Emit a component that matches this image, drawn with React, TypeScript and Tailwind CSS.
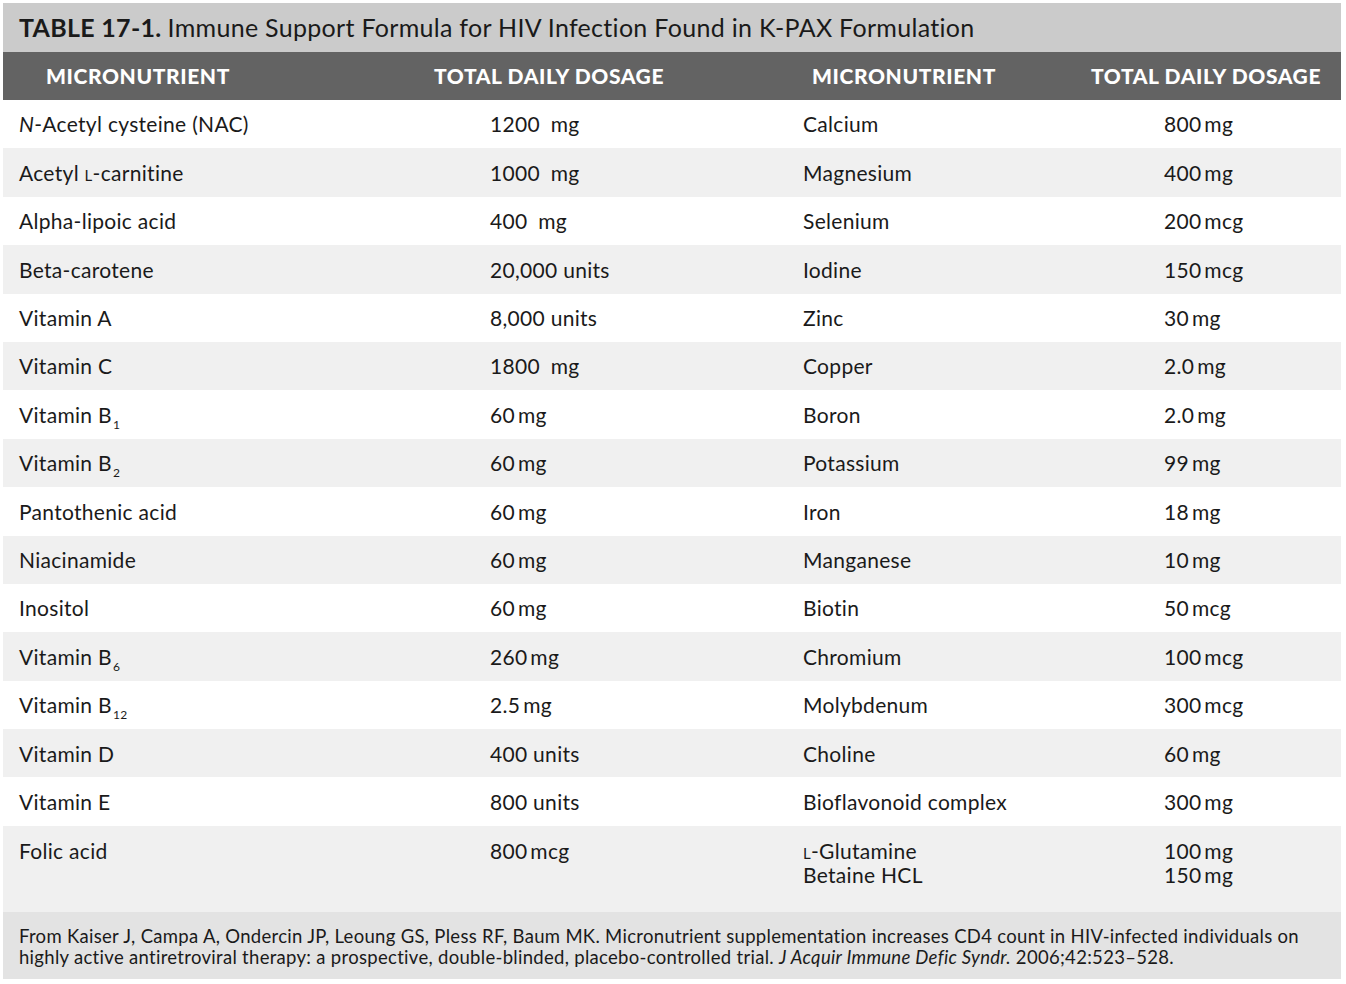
import React from "react";

const F = { fontFamily: "Lato, 'Noto Sans', 'Liberation Sans', sans-serif" };

const T = "\u2009";

const Sm = ({ c }: { c: string }) => <span className="text-[15px] leading-none">{c}</span>;
const Sub = ({ c }: { c: string }) => (
  <span className="text-[12px] leading-none relative top-[6px] ml-[1px]">{c}</span>
);

type Row = [React.ReactNode, string, React.ReactNode, React.ReactNode];

const rows: Row[] = [
  [<><i>N</i>-Acetyl cysteine (NAC)</>, "1200\u2002mg", "Calcium", `800${T}mg`],
  [<>Acetyl <Sm c="L" />-carnitine</>, "1000\u2002mg", "Magnesium", `400${T}mg`],
  ["Alpha-lipoic acid", "400\u2002mg", "Selenium", `200${T}mcg`],
  ["Beta-carotene", "20,000 units", "Iodine", `150${T}mcg`],
  ["Vitamin A", "8,000 units", "Zinc", `30${T}mg`],
  ["Vitamin C", "1800\u2002mg", "Copper", `2.0${T}mg`],
  [<>Vitamin B<Sub c="1" /></>, `60${T}mg`, "Boron", `2.0${T}mg`],
  [<>Vitamin B<Sub c="2" /></>, `60${T}mg`, "Potassium", `99${T}mg`],
  ["Pantothenic acid", `60${T}mg`, "Iron", `18${T}mg`],
  ["Niacinamide", `60${T}mg`, "Manganese", `10${T}mg`],
  ["Inositol", `60${T}mg`, "Biotin", `50${T}mcg`],
  [<>Vitamin B<Sub c="6" /></>, `260${T}mg`, "Chromium", `100${T}mcg`],
  [<>Vitamin B<Sub c="12" /></>, `2.5${T}mg`, "Molybdenum", `300${T}mcg`],
  ["Vitamin D", "400 units", "Choline", `60${T}mg`],
  ["Vitamin E", "800 units", "Bioflavonoid complex", `300${T}mg`],
];

export default function App() {
  return (
    <div className="w-[1346px] h-[984px] bg-white pt-[3px] pl-[3px]" style={F}>
      <div className="w-[1338px] text-[#1a1a1a]">
        {/* Title */}
        <div className="h-[49px] bg-[#cbcbcb] flex items-center pl-[16px] text-[25px] tracking-[0.3px] whitespace-nowrap">
          <span className="font-bold">TABLE 17-1.</span>
          <span className="ml-[6px]">Immune Support Formula for HIV Infection Found in K-PAX Formulation</span>
        </div>
        {/* Header */}
        <div className="h-[48px] bg-[#636363] flex items-center text-white font-black text-[21px] tracking-[0.6px] whitespace-nowrap">
          <div className="w-[202px] ml-[34px] flex justify-center">MICRONUTRIENT</div>
          <div className="w-[256px] ml-[182px] flex justify-center">TOTAL DAILY DOSAGE</div>
          <div className="w-[202px] ml-[126px] flex justify-center">MICRONUTRIENT</div>
          <div className="w-[254px] ml-[74px] flex justify-center">TOTAL DAILY DOSAGE</div>
        </div>
        {/* Rows */}
        {rows.map((r, i) => (
          <div
            key={i}
            className={`h-[48.4px] flex items-center text-[21px] tracking-[0.3px] whitespace-nowrap ${i % 2 === 1 ? "bg-[#f0f0f0]" : "bg-white"}`}
          >
            <div className="w-[487px] pl-[16px]">{r[0]}</div>
            <div className="w-[313px]">{r[1]}</div>
            <div className="w-[361px]">{r[2]}</div>
            <div className="flex-1">{r[3]}</div>
          </div>
        ))}
        <div className="h-[86px] flex items-start pt-[13px] text-[21px] tracking-[0.3px] leading-[24px] bg-[#f0f0f0] whitespace-nowrap">
          <div className="w-[487px] pl-[16px]">Folic acid</div>
          <div className="w-[313px]">{`800${T}mcg`}</div>
          <div className="w-[361px]">
            <div className="h-[24px]"><Sm c="L" />-Glutamine</div>
            <div className="h-[24px]">Betaine HCL</div>
          </div>
          <div className="flex-1">
            <div className="h-[24px]">{`100${T}mg`}</div>
            <div className="h-[24px]">{`150${T}mg`}</div>
          </div>
        </div>
        {/* Footer */}
        <div className="h-[67px] bg-[#e3e3e3] pl-[16px] pt-[14px] text-[18.5px] tracking-[0.3px] leading-[21px] whitespace-nowrap">
          From Kaiser J, Campa A, Ondercin JP, Leoung GS, Pless RF, Baum MK. Micronutrient supplementation increases CD4 count in HIV-infected individuals on
          <br />
          highly active antiretroviral therapy: a prospective, double-blinded, placebo-controlled trial. <i>J Acquir Immune Defic Syndr.</i> 2006;42:523–528.
        </div>
      </div>
    </div>
  );
}
